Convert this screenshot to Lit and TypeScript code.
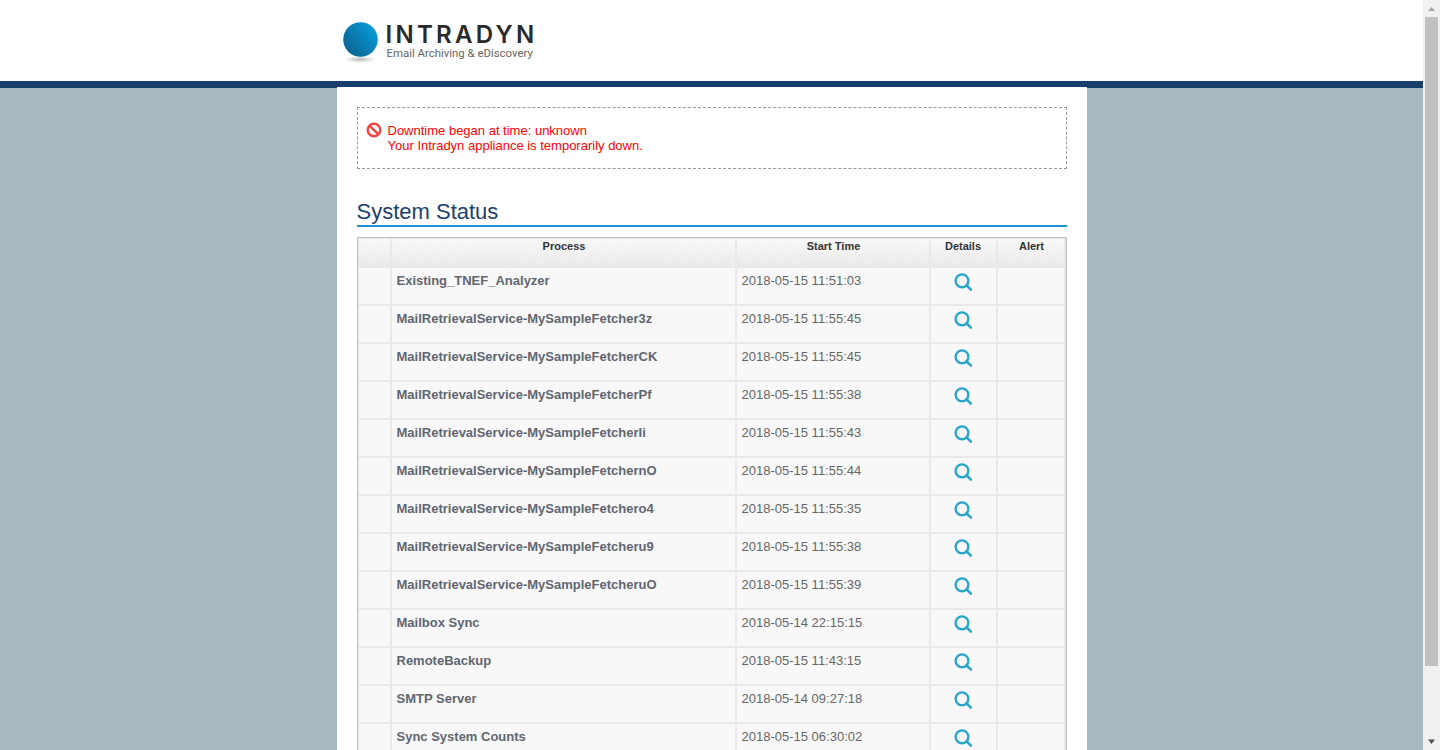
import { LitElement, html, css, svg } from "lit";
import { customElement } from "lit/decorators.js";

const rows = [
  { name: "Existing_TNEF_Analyzer", time: "2018-05-15 11:51:03" },
  { name: "MailRetrievalService-MySampleFetcher3z", time: "2018-05-15 11:55:45" },
  { name: "MailRetrievalService-MySampleFetcherCK", time: "2018-05-15 11:55:45" },
  { name: "MailRetrievalService-MySampleFetcherPf", time: "2018-05-15 11:55:38" },
  { name: "MailRetrievalService-MySampleFetcherIi", time: "2018-05-15 11:55:43" },
  { name: "MailRetrievalService-MySampleFetchernO", time: "2018-05-15 11:55:44" },
  { name: "MailRetrievalService-MySampleFetchero4", time: "2018-05-15 11:55:35" },
  { name: "MailRetrievalService-MySampleFetcheru9", time: "2018-05-15 11:55:38" },
  { name: "MailRetrievalService-MySampleFetcheruO", time: "2018-05-15 11:55:39" },
  { name: "Mailbox Sync", time: "2018-05-14 22:15:15" },
  { name: "RemoteBackup", time: "2018-05-15 11:43:15" },
  { name: "SMTP Server", time: "2018-05-14 09:27:18" },
  { name: "Sync System Counts", time: "2018-05-15 06:30:02" }
];

const searchIcon = svg`
  <circle cx="8" cy="7.8" r="6.4" fill="none" stroke="currentColor" stroke-width="2.4"></circle>
  <path d="M12.6 12.5 L17 16.6" fill="none" stroke="currentColor" stroke-width="2.6" stroke-linecap="round"></path>
`;

@customElement("app-root")
export class AppRoot extends LitElement {
  static styles = css`
    :host {
      display: flex;
      height: 750px;
      overflow: hidden;
      font-family: "Liberation Sans", Arial, sans-serif;
      background: #a8b9c1;
    }
    .page {
      flex: 1;
      min-width: 0;
    }
    header {
      height: 81px;
      background: #fff;
      border-bottom: 7px solid #163f6b;
      box-sizing: content-box;
    }
    .logo {
      width: 750px;
      margin: 0 auto;
      display: flex;
      padding: 22px 0 0 6px;
      box-sizing: border-box;
      gap: 7px;
    }
    .ball {
      display: block;
      flex: 0 0 auto;
    }
    .wordmark {
      display: flex;
      flex-direction: column;
    }
    .brand {
      font-family: Inter, "Open Sans", sans-serif;
      font-size: 24px;
      line-height: 22px;
      margin-top: 2px;
      font-weight: 600;
      letter-spacing: 3.3px;
      color: #2a2a2a;
    }
    .tagline {
      font-family: Roboto, "Open Sans", sans-serif;
      font-size: 11.4px;
      line-height: 14px;
      margin: 0 0 0 1px;
      color: #666;
    }
    main {
      width: 750px;
      margin: -1px auto 0;
      position: relative;
      background: #fff;
      padding: 20px;
      box-sizing: border-box;
      height: 664px;
      overflow: hidden;
    }
    .notice {
      display: flex;
      gap: 6px;
      height: 62px;
      box-sizing: border-box;
      border: 1px dashed #999;
      padding: 14px 8px 0;
      color: #f00;
      font-size: 13px;
      line-height: 15px;
    }
    .notice svg {
      flex: 0 0 auto;
    }
    .notice div {
      padding-top: 1px;
    }
    h2 {
      margin: 29px 0 0;
      height: 27px;
      font-size: 22px;
      line-height: 28px;
      font-weight: 400;
      color: #1d3f6e;
      border-bottom: 2px solid #1a94cf;
      box-sizing: content-box;
    }
    .table-wrap {
      margin-top: 10px;
      border: 1px solid #bdbdbd;
      border-bottom: 0;
      padding: 1px 1px 0;
      background: #e8e8e8;
    }
    table {
      width: 706px;
      border-collapse: separate;
      border-spacing: 0;
      table-layout: fixed;
    }
    th,
    td {
      padding: 0;
      border-right: 2px solid #e8e8e8;
      border-bottom: 2px solid #e8e8e8;
      box-sizing: border-box;
      vertical-align: top;
    }
    th:last-child,
    td:last-child {
      border-right-width: 1px;
    }
    th {
      height: 29px;
      font-size: 11px;
      line-height: 14px;
      padding-left: 2px;
      font-weight: 700;
      color: #333;
      text-align: center;
      background:
        repeating-linear-gradient(135deg, rgba(255, 255, 255, 0.25) 0 1px, rgba(255, 255, 255, 0) 1px 3px),
        linear-gradient(#f8f8f8, #e8e8e8);
    }
    th.details-head {
      padding-left: 0;
    }
    td {
      height: 38px;
      background: #f8f8f8;
      font-size: 13px;
      line-height: 15px;
      color: #666;
      padding-top: 5px;
    }
    td.name {
      padding-left: 5px;
      font-weight: 700;
      color: #5f6670;
    }
    td.time {
      padding-left: 5px;
    }
    td.details {
      text-align: center;
      color: #2aa5cc;
      padding-top: 5px;
      padding-right: 1px;
    }
    td.details svg {
      display: inline-block;
      vertical-align: top;
    }
    .scrollbar {
      flex: 0 0 17px;
      background: #f1f1f1;
      display: flex;
      flex-direction: column;
      align-items: center;
    }
    .arrow {
      display: block;
      flex: 0 0 17px;
    }
    .thumb {
      width: 13px;
      flex: 0 0 649px;
      background: #c1c1c1;
    }
    .spacer {
      flex: 1;
    }
  `;

  render() {
    return html`
      <div class="page">
        <header>
          <div class="logo">
            <svg class="ball" width="36" height="42" viewBox="0 0 36 42">
              <defs>
                <linearGradient id="ballFill" x1="0.05" y1="0.9" x2="0.95" y2="0.15">
                  <stop offset="0" stop-color="#0a5f8c"></stop>
                  <stop offset="1" stop-color="#0a9ddb"></stop>
                </linearGradient>
                <radialGradient id="ballShadow">
                  <stop offset="0" stop-color="#bbb"></stop>
                  <stop offset="1" stop-color="#fff"></stop>
                </radialGradient>
              </defs>
              <ellipse cx="17.5" cy="37.5" rx="16" ry="3.5" fill="url(#ballShadow)"></ellipse>
              <circle cx="17.5" cy="17.5" r="17.3" fill="url(#ballFill)"></circle>
            </svg>
            <div class="wordmark">
              <span class="brand">INTRADYN</span>
              <span class="tagline">Email Archiving &amp; eDiscovery</span>
            </div>
          </div>
        </header>
        <main>
          <div class="notice">
            <svg width="16" height="16" viewBox="0 0 16 16">
              <circle cx="8" cy="8" r="6.3" fill="none" stroke="#f04444" stroke-width="2.4"></circle>
              <path d="M3.6 3.6 L12.4 12.4" stroke="#f04444" stroke-width="2.4"></path>
            </svg>
            <div>
              Downtime began at time: unknown<br />
              Your Intradyn appliance is temporarily down.
            </div>
          </div>
          <h2>System Status</h2>
          <div class="table-wrap">
            <table>
              <colgroup>
                <col style="width:33px" />
                <col style="width:345px" />
                <col style="width:194px" />
                <col style="width:67px" />
                <col style="width:67px" />
              </colgroup>
              <thead>
                <tr>
                  <th></th>
                  <th>Process</th>
                  <th>Start Time</th>
                  <th class="details-head">Details</th>
                  <th>Alert</th>
                </tr>
              </thead>
              <tbody>
                ${rows.map(
                  (row) => html`
                    <tr>
                      <td></td>
                      <td class="name">${row.name}</td>
                      <td class="time">${row.time}</td>
                      <td class="details">
                        <svg width="18" height="18" viewBox="0 0 18 18">${searchIcon}</svg>
                      </td>
                      <td></td>
                    </tr>
                  `
                )}
              </tbody>
            </table>
          </div>
        </main>
      </div>
      <div class="scrollbar">
        <svg class="arrow" width="17" height="17" viewBox="0 0 17 17">
          <path d="M8.5 7 L12 11 H5 Z" fill="#a3a3a3"></path>
        </svg>
        <div class="thumb"></div>
        <div class="spacer"></div>
        <svg class="arrow" width="17" height="17" viewBox="0 0 17 17">
          <path d="M8.5 11 L12 6.5 H5 Z" fill="#505050"></path>
        </svg>
      </div>
    `;
  }
}
